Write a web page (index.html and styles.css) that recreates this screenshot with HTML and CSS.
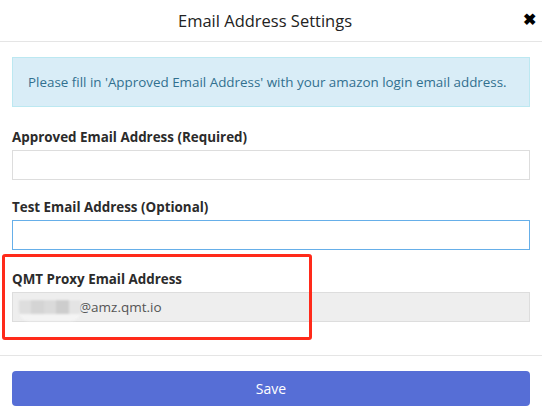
FILE: index.html
```html
<!DOCTYPE html>
<html>
<head>
<meta charset="utf-8">
<link rel="stylesheet" href="styles.css">
</head>
<body>
<div class="modal">
  <div class="modal-header">
    <h4 class="modal-title">Email Address Settings</h4>
    <span class="close">&#x2716;</span>
  </div>
  <div class="modal-body">
    <div class="alert">Please fill in 'Approved Email Address' with your amazon login email address.</div>
    <div class="group">
      <label class="label">Approved Email Address (Required)</label>
      <div class="input"></div>
    </div>
    <div class="group">
      <label class="label">Test Email Address (Optional)</label>
      <div class="input focus"></div>
    </div>
    <div class="group highlight">
      <label class="label">QMT Proxy Email Address</label>
      <div class="input disabled">
        <span class="blur"><i class="b1"></i><i class="b2"></i><i class="b3"></i><i class="b4"></i><i class="b5"></i></span>
        <span class="val">@amz.qmt.io</span>
      </div>
      <div class="annot"></div>
    </div>
  </div>
  <div class="modal-footer">
    <button class="btn">Save</button>
  </div>
</div>
</body>
</html>
```

FILE: styles.css
```css
* { box-sizing: border-box; }
html, body { margin: 0; padding: 0; background: #fff; }
body {
  font-family: "Open Sans", "Noto Sans", sans-serif;
  color: #333;
  width: 542px;
  height: 417px;
  overflow: hidden;
}
.modal { width: 542px; }
.modal-header {
  height: 42px;
  border-bottom: 1px solid #e5e5e5;
  display: flex;
  align-items: center;
  justify-content: center;
  position: relative;
  padding-right: 12px;
}
.modal-title {
  margin: 0;
  font-weight: 400;
  font-size: 16.5px;
  color: #222;
}
.close {
  position: absolute;
  right: 6px;
  top: 9px;
  font-size: 16px;
  font-weight: bold;
  color: #000;
  line-height: 20px;
}
.modal-body { padding: 15px 12px 33px 12px; }
.alert {
  background: #d9edf7;
  border: 1px solid #bce8f1;
  color: #31708f;
  height: 50px;
  display: flex;
  align-items: center;
  padding: 0 15px;
  font-size: 13.4px;
  margin-bottom: 20px;
}
.group { position: relative; }
.group + .group { margin-top: 17px; }
.group.highlight { margin-top: 19px; }
.label {
  display: block;
  font-weight: 700;
  font-size: 13.4px;
  line-height: 20px;
  margin-bottom: 3px;
  color: #2b2b2b;
}
.input {
  height: 30px;
  border: 1px solid #ddd;
  background: #fff;
  display: flex;
  align-items: center;
  padding: 0 6px;
  font-size: 13.5px;
}
.input.focus { border-color: #66afe9; }
.input.disabled { background: #eee; border-color: #ddd; color: #555; }
.blur {
  display: flex;
  width: 62px;
  height: 22px;
  margin-top: 6px;
  border-radius: 0 0 10px 10px;
  overflow: hidden;
  background: #f4f4f4;
  filter: blur(1px);
}
.blur i { display: block; flex: 1; height: 14px; margin-top: 1px; }
.b1 { background: #dedede; }
.b2 { background: #d4d4d4; }
.b3 { background: #dadada; }
.b4 { background: #cdcdcd; }
.b5 { background: #e4e4e4; }
.val { margin-left: -2px; }
.annot {
  position: absolute;
  left: -10px;
  top: -15px;
  width: 310px;
  height: 86px;
  border: 3px solid #ff2a1a;
  border-radius: 3px;
  pointer-events: none;
}
.modal-footer {
  border-top: 1px solid #e5e5e5;
  padding: 15px 12px 11px;
}
.btn {
  display: block;
  width: 100%;
  height: 35px;
  border: none;
  border-radius: 4px;
  background: #566ed6;
  color: #fff;
  font-family: inherit;
  font-size: 14px;
}
```
